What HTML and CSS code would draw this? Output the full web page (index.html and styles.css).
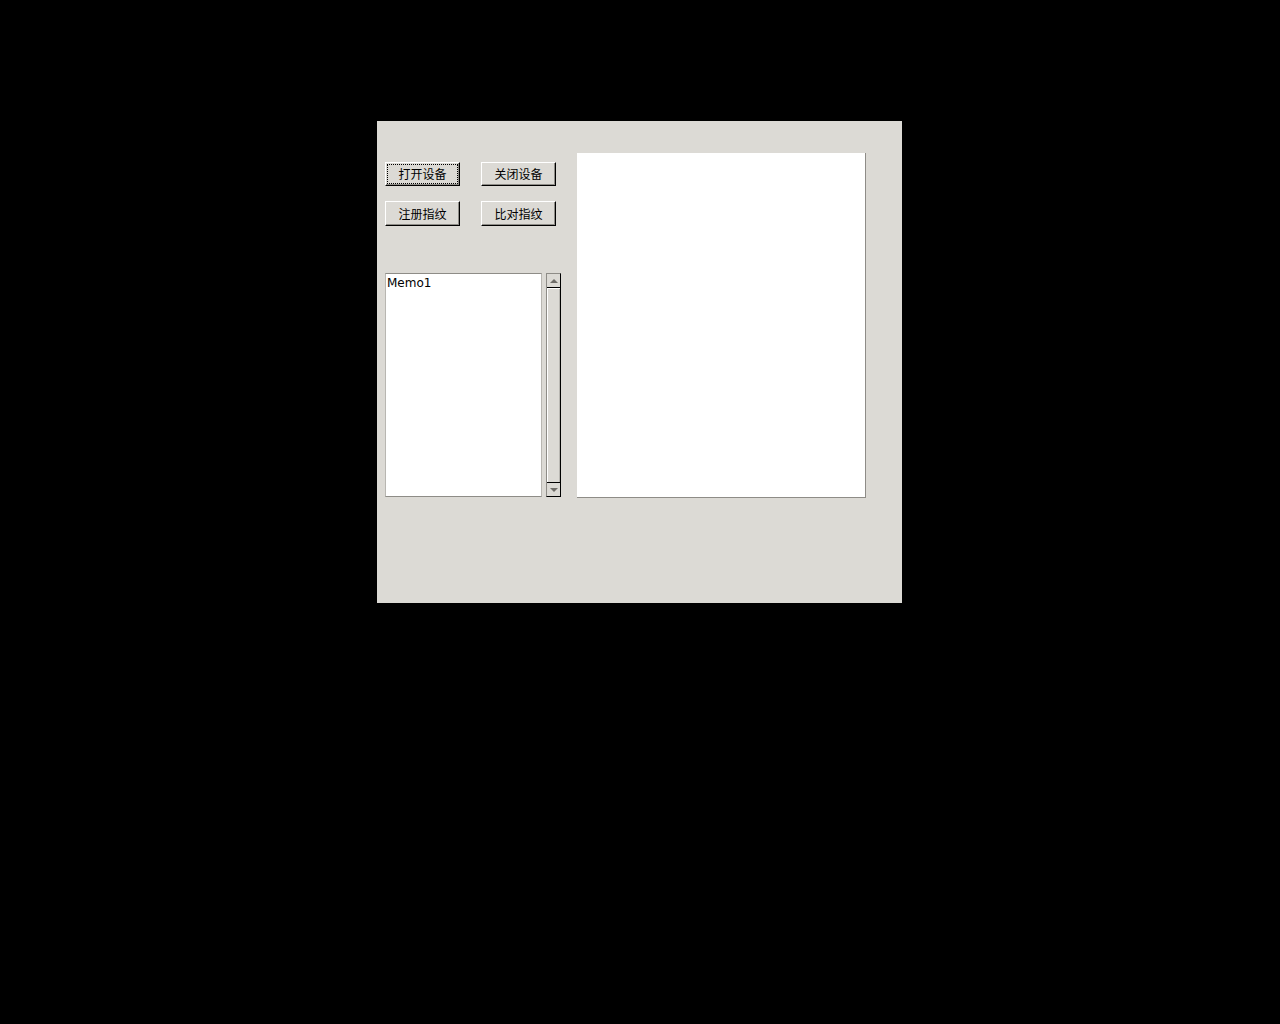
FILE: index.html
```html
<!DOCTYPE html>
<html lang="zh">
<head>
<meta charset="utf-8">
<title>Form1</title>
<link rel="stylesheet" href="styles.css">
</head>
<body>
<div class="window">
  <div class="left">
    <div class="buttons">
      <button class="btn focused"><span class="label">打开设备</span></button>
      <button class="btn"><span class="label">关闭设备</span></button>
      <button class="btn"><span class="label">注册指纹</span></button>
      <button class="btn"><span class="label">比对指纹</span></button>
    </div>
    <div class="memo-row">
      <div class="memo">Memo1</div>
      <div class="scrollbar">
        <div class="arrow up"><span class="tri tri-up"></span></div>
        <div class="track"></div>
        <div class="arrow down"><span class="tri tri-down"></span></div>
      </div>
    </div>
  </div>
  <div class="image-panel"></div>
</div>
</body>
</html>
```
FILE: styles.css
```css
html, body {
  margin: 0;
  padding: 0;
  background: #000;
}
body {
  width: 1280px;
  height: 1024px;
  overflow: hidden;
}
.window {
  margin-left: 377px;
  margin-top: 121px;
  width: 525px;
  height: 482px;
  box-sizing: border-box;
  background: #dcdad5;
  display: flex;
  align-items: flex-start;
  padding-left: 8px;
  gap: 16px;
}
.left {
  margin-top: 41px;
  width: 176px;
  display: flex;
  flex-direction: column;
  gap: 47px;
}
.buttons {
  display: grid;
  grid-template-columns: 75px 75px;
  column-gap: 21px;
  row-gap: 15px;
}
.btn {
  width: 75px;
  height: 24px;
  margin: 0;
  padding: 0;
  box-sizing: border-box;
  background: #dcdad5;
  border: 1px solid;
  border-color: #ffffff #000000 #000000 #ffffff;
  box-shadow: inset -1px -1px 0 #8e8c87;
  font-family: "Noto Sans CJK SC", "DejaVu Sans", sans-serif;
  font-size: 12px;
  line-height: 20px;
  color: #000;
  display: flex;
  align-items: center;
  justify-content: center;
}
.btn:nth-child(n+3) {
  height: 25px;
}
.btn.focused {
  outline: 1px dotted #000;
  outline-offset: -3px;
}
.label {
  display: block;
}
.memo-row {
  display: flex;
  gap: 4px;
  height: 224px;
}
.memo {
  width: 157px;
  height: 224px;
  box-sizing: border-box;
  background: #fff;
  border: 1px solid;
  border-color: #8e8c87 #b8b6b1 #8e8c87 #b8b6b1;
  font-family: "DejaVu Sans", sans-serif;
  font-size: 12px;
  line-height: 16px;
  padding: 1px 0 0 1px;
  color: #000;
}
.scrollbar {
  width: 15px;
  height: 224px;
  box-sizing: border-box;
  border: 1px solid;
  border-color: #8e8c87 #000 #000 #8e8c87;
  background: #dcdad5;
  display: flex;
  flex-direction: column;
}
.arrow {
  height: 13px;
  flex: none;
  display: flex;
  align-items: center;
  justify-content: center;
  background: #dcdad5;
}
.arrow.up {
  border-bottom: 1px solid #000;
}
.arrow.down {
  border-top: 1px solid #000;
}
.track {
  flex: 1;
  border-left: 1px solid #fff;
  border-top: 1px solid #fff;
  box-shadow: inset -1px 0 0 #b8b6b1;
}
.tri {
  width: 0;
  height: 0;
  border-left: 4px solid transparent;
  border-right: 4px solid transparent;
}
.tri-up {
  border-bottom: 4px solid #6f6d69;
}
.tri-down {
  border-top: 4px solid #6f6d69;
}
.image-panel {
  margin-top: 32px;
  width: 289px;
  height: 345px;
  box-sizing: border-box;
  background: #fff;
  border-right: 1px solid #8e8c87;
  border-bottom: 1px solid #8e8c87;
}
```
